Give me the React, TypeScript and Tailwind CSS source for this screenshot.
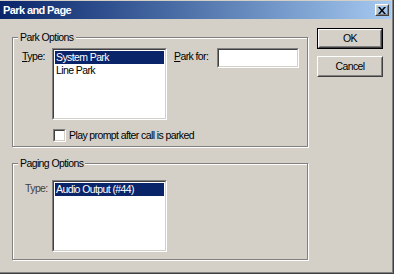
import React from "react";

function Sunken({ className, children }: { className: string; children?: React.ReactNode }) {
  return (
    <div className={"border border-t-[#808080] border-l-[#808080] border-b-white border-r-white " + className}>
      <div className="w-full h-full border border-t-[#404040] border-l-[#404040] border-b-[#d4d0c8] border-r-[#d4d0c8] bg-white">
        {children}
      </div>
    </div>
  );
}

function Raised({ children, className }: { children?: React.ReactNode; className: string }) {
  return (
    <div className={"border border-t-white border-l-white border-b-[#404040] border-r-[#404040] " + className}>
      <div className="w-full h-full border border-t-[#d4d0c8] border-l-[#d4d0c8] border-b-[#808080] border-r-[#808080] flex items-center justify-center">
        {children}
      </div>
    </div>
  );
}

function Group({ title, className, children }: { title: string; className: string; children?: React.ReactNode }) {
  return (
    <div className={"relative w-[296px] border border-[#808080] shadow-[inset_1px_1px_0_#ffffff,1px_1px_0_#ffffff] " + className}>
      <span className="absolute left-[5px] top-[-7px] bg-[#d4d0c8] px-[2px] leading-[13px] text-black">{title}</span>
      {children}
    </div>
  );
}

export default function App() {
  return (
    <div className="w-[394px] h-[274px] bg-[#d4d0c8] border-r border-b border-[#404040] font-['Liberation_Sans',Arial,sans-serif] text-[10.5px] leading-[13px] tracking-[-0.6px] text-black select-none">
      <div className="w-full h-full border-r border-b border-[#808080] pt-px flex flex-col">
        <div className="h-[18px] mr-[1px] bg-gradient-to-r from-[#0a246a] to-[#a6caf0] flex items-center justify-between pl-[3px] pr-[2px]">
          <span className="text-white font-bold tracking-[-0.6px] text-[11px]">Park and Page</span>
          <Raised className="w-[14px] h-[12px]">
            <svg width="8" height="7" viewBox="0 0 8 7">
              <path d="M0 0h2l2 2.5L6 0h2L5 3.5 8 7H6L4 4.5 2 7H0l3-3.5z" fill="black" />
            </svg>
          </Raised>
        </div>
        <div className="flex flex-row pl-[12px]">
          <div className="flex flex-col pt-[18px]">
            <Group title="Park Options" className="h-[110px]">
              <div className="flex flex-row items-start pt-[10px] pl-[9px]">
                <span className="w-[30px] pt-[2px]"><u>T</u>ype:</span>
                <Sunken className="w-[115px] h-[72px]">
                  <div className="bg-[#0a246a] text-white h-[13px] pl-[1px] mt-px mx-px">System Park</div>
                  <div className="pl-[1px] mx-px">Line Park</div>
                </Sunken>
                <span className="ml-[7px] w-[43px] pt-[2px]"><u>P</u>ark for:</span>
                <Sunken className="w-[82px] h-[20px]" />
              </div>
              <div className="flex flex-row items-center pl-[40px] mt-[9px] gap-[3px]">
                <Sunken className="w-[13px] h-[13px]" />
                <span>Play prompt after call is parked</span>
              </div>
            </Group>
            <Group title="Paging Options" className="h-[97px] mt-[16px]">
              <div className="flex flex-row items-start pt-[16px] pl-[12px]">
                <span className="w-[27px] pt-[2px] text-[#404040]">Type:</span>
                <Sunken className="w-[115px] h-[72px]">
                  <div className="bg-[#0a246a] text-white h-[13px] pl-[1px] mt-px mx-px">Audio Output (#44)</div>
                </Sunken>
              </div>
            </Group>
          </div>
          <div className="flex flex-col pt-[9px] ml-[9px] gap-[7px]">
            <div className="border border-black w-[66px] h-[21px]">
              <Raised className="w-full h-full">OK</Raised>
            </div>
            <Raised className="w-[66px] h-[21px]">Cancel</Raised>
          </div>
        </div>
      </div>
    </div>
  );
}
